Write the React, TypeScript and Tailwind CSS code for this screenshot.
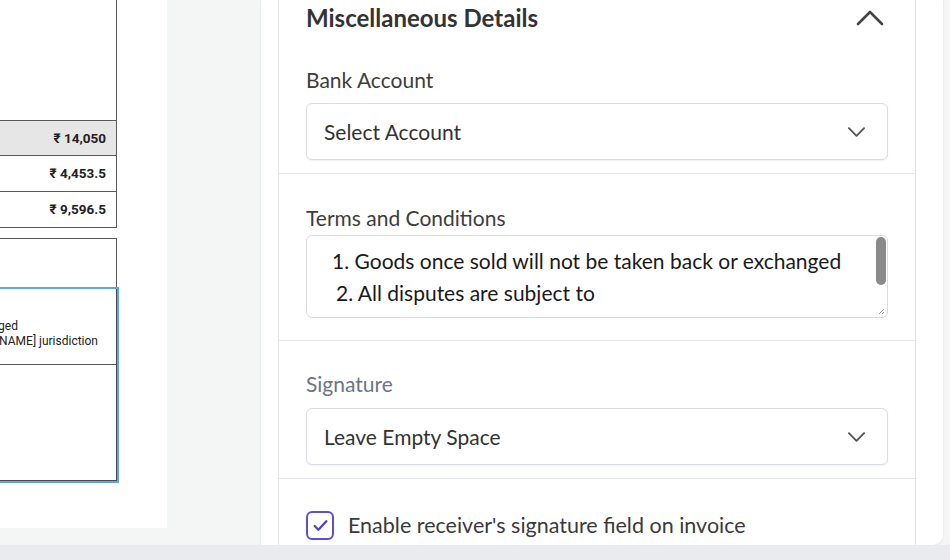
import React from "react";

const ChevronDown = ({ className }: { className?: string }) => (
  <svg viewBox="0 0 20 12" fill="none" stroke="currentColor" strokeWidth={2} strokeLinecap="round" strokeLinejoin="round" className={className}>
    <path d="M2 2l8 8 8-8" />
  </svg>
);

const ChevronUp = ({ className }: { className?: string }) => (
  <svg viewBox="0 0 28 18" fill="none" stroke="currentColor" strokeWidth={2.6} strokeLinecap="round" strokeLinejoin="round" className={className}>
    <path d="M2 15L14 3l12 12" />
  </svg>
);

const SelectBox = ({ value }: { value: string }) => (
  <div className="h-[57px] w-full rounded-[6px] border border-[#d9dce1] bg-white shadow-[0_1px_2px_rgba(0,0,0,0.06)] flex items-center justify-between pl-[17px] pr-[21px]">
    <span className="text-[21px] text-[#333]">{value}</span>
    <ChevronDown className="w-[19px] h-[12px] text-[#555]" />
  </div>
);

function InvoicePreview() {
  return (
    <div className="w-[167px] h-[528px] bg-white overflow-hidden flex flex-col items-end pr-[50px] font-['Roboto',sans-serif]">
      <div className="w-[300px] shrink-0 border-x-[1.5px] border-b-[1.5px] border-[#5a5a5a]">
        <div className="h-[120px]" />
        <div className="h-[35px] bg-[#e6e6e6] border-t-[1.5px] border-[#5a5a5a] flex items-center justify-end pr-[10px] text-[13.5px] font-bold text-[#222]">
          ₹ 14,050
        </div>
        <div className="h-[36px] border-t-[1.5px] border-[#5a5a5a] flex items-center justify-end pr-[10px] text-[13.5px] font-bold text-[#222]">
          ₹ 4,453.5
        </div>
        <div className="h-[36px] border-t-[1.5px] border-[#5a5a5a] flex items-center justify-end pr-[10px] text-[13.5px] font-bold text-[#222]">
          ₹ 9,596.5
        </div>
      </div>
      <div className="mt-[10px] w-[300px] shrink-0 border-t-[1.5px] border-r-[1.5px] border-[#5a5a5a]">
        <div className="h-[48px]" />
        <div className="border-2 border-[#5ea4ec] mr-[-3px]">
          <div className="border-r-[1.5px] border-b-[1.5px] border-[#4a4a4a]">
            <div className="h-[76px] border-b-[1.5px] border-[#5a5a5a] flex flex-col justify-center items-end text-[12px] leading-[15px] text-[#222] pt-[14px] whitespace-nowrap">
              <div className="pr-[98px]">1. Goods once sold will not be taken back or exchanged</div>
              <div className="pr-[18px]">2. All disputes are subject to [CITY NAME] jurisdiction</div>
            </div>
            <div className="h-[115px]" />
          </div>
        </div>
      </div>
    </div>
  );
}

export default function App() {
  return (
    <div className="w-[950px] h-[560px] bg-[#f4f5f5] flex flex-col overflow-hidden font-['Lato',sans-serif]">
      <div className="h-[545px] flex">
        <InvoicePreview />
        <div className="w-[94px] shrink-0" />
        <div className="w-[682px] shrink-0 h-full bg-white rounded-br-[10px] shadow-[0_1px_3px_rgba(0,0,0,0.08)] pl-[17px] pr-[27px] overflow-hidden">
          <div className="h-full border-x border-[#e4e6ea] flex flex-col">
            <div className="px-[27px] pt-[4px] pb-[13px] border-b border-[#e4e6ea]">
              <div className="flex items-center justify-between h-[28px]">
                <h2 className="text-[24px] font-bold text-[#333] leading-[28px]">Miscellaneous Details</h2>
                <ChevronUp className="w-[28px] h-[18px] text-[#444] mr-[4px]" />
              </div>
              <div className="mt-[36px] text-[21px] leading-[24px] text-[#3d3d3d]">Bank Account</div>
              <div className="mt-[11px]">
                <SelectBox value="Select Account" />
              </div>
            </div>

            <div className="px-[27px] pt-[32px] pb-[22px] border-b border-[#e4e6ea]">
              <div className="text-[21px] leading-[24px] text-[#3d3d3d]">Terms and Conditions</div>
              <div className="relative mt-[5px] h-[83px] rounded-[6px] border border-[#d9dce1] overflow-hidden">
                <div className="pt-[9px] text-[21px] leading-[32px] text-[#1a1a1a] whitespace-nowrap">
                  <div className="pl-[25px]">1. Goods once sold will not be taken back or exchanged</div>
                  <div className="pl-[29px]">2. All disputes are subject to</div>
                  <div className="pl-[29px]">[CITY NAME] jurisdiction</div>
                </div>
                <div className="absolute right-[1px] top-[1px] w-[10px] h-[48px] rounded-full bg-[#8a8a8a]" />
                <svg viewBox="0 0 8 8" className="absolute right-[2px] bottom-[2px] w-[8px] h-[8px]" stroke="#999" strokeWidth={1}>
                  <path d="M7 2L2 7M7 5L5 7" />
                </svg>
              </div>
            </div>

            <div className="px-[27px] pt-[31px] pb-[13px] border-b border-[#e4e6ea]">
              <div className="text-[21px] leading-[24px] text-[#6b7588]">Signature</div>
              <div className="mt-[12px]">
                <SelectBox value="Leave Empty Space" />
              </div>
            </div>

            <div className="px-[27px] pt-[30px] flex items-center gap-[14px]">
              <div className="w-[28px] h-[29px] rounded-[6px] border-2 border-[#5a4fd6] flex items-center justify-center">
                <svg viewBox="0 0 16 16" fill="none" stroke="#4f45d0" strokeWidth={2.2} strokeLinecap="round" strokeLinejoin="round" className="w-[17px] h-[17px]">
                  <path d="M2.5 8.5l3.5 3.5 7.5-8" />
                </svg>
              </div>
              <span className="text-[21.5px] text-[#3a3a3a]">Enable receiver's signature field on invoice</span>
            </div>
          </div>
        </div>
      </div>
      <div className="h-[15px] bg-[#e9ebee]" />
    </div>
  );
}
